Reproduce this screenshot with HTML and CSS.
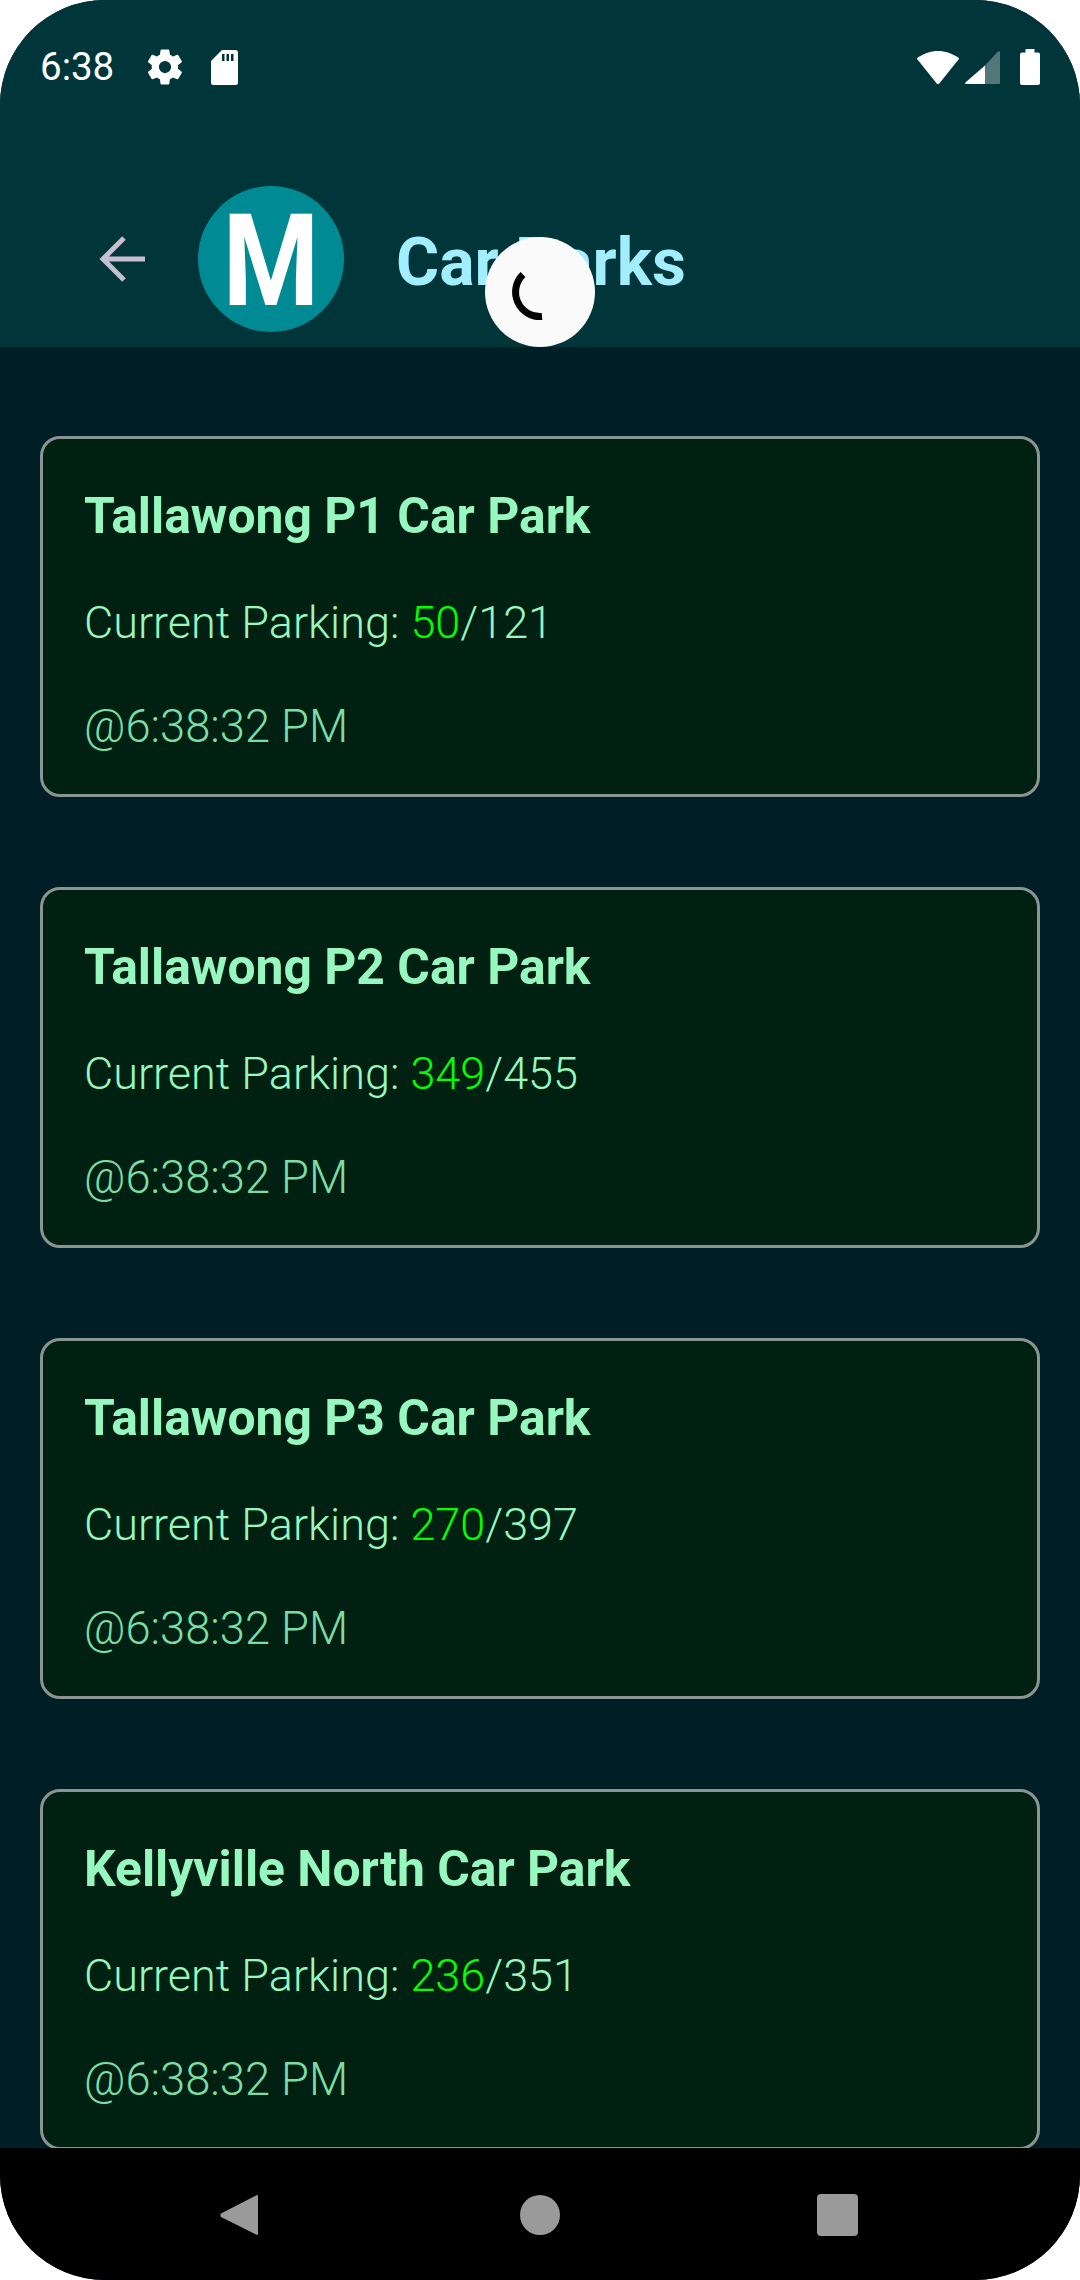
FILE: index.html
```html
<!DOCTYPE html>
<html lang="en">
<head>
    <meta charset="UTF-8">
    <meta name="viewport" content="width=device-width, initial-scale=1.0">
    <title>Car Parks</title>
    <link rel="stylesheet" href="styles.css">
</head>
<body>
    <div class="phone">
        <header class="header">
            <div class="status-bar">
                <div class="status-left">
                    <span class="clock">6:38</span>
                    <svg class="gear" viewBox="0 0 24 24"><path fill="#fff" d="M19.4 13c.05-.3.1-.65.1-1s-.05-.7-.1-1l2.1-1.65c.2-.15.25-.4.1-.65l-2-3.45c-.1-.2-.4-.3-.6-.2l-2.5 1c-.5-.4-1.05-.7-1.7-1L14.45 2.4c0-.25-.25-.4-.5-.4h-4c-.25 0-.45.15-.5.4L9.1 5.05c-.6.25-1.15.6-1.7 1l-2.5-1c-.25-.1-.5 0-.6.2l-2 3.45c-.15.25-.1.5.1.65L4.5 11c-.05.3-.1.65-.1 1s.05.7.1 1l-2.1 1.65c-.2.15-.25.4-.1.65l2 3.45c.1.2.4.3.6.2l2.5-1c.5.4 1.05.7 1.7 1l.35 2.65c.05.25.25.4.5.4h4c.25 0 .45-.15.5-.4l.35-2.65c.6-.25 1.15-.6 1.7-1l2.5 1c.25.1.5 0 .6-.2l2-3.45c.15-.25.1-.5-.1-.65L19.4 13zM12 15.5a3.5 3.5 0 1 1 0-7 3.5 3.5 0 0 1 0 7z"/></svg>
                    <svg class="sd" viewBox="0 0 27 35"><path fill="#fff" d="M11 0h13.500A2.500 2.500 0 0 1 27 2.500v30a2.500 2.500 0 0 1-2.500 2.500h-22A2.500 2.500 0 0 1 0 32.500V11z"/><path fill="#00363a" d="M11 4h2.500v7H11zM15.500 4H18v7h-2.500zM20 4h2.500v7H20z"/></svg>
                </div>
                <div class="status-right">
                    <svg class="wifi" viewBox="0 0 42 33"><path fill="#fff" d="M21 0c7.500 0 14 2.500 20.500 6.800.5.4.6 1 .2 1.500L22.300 32.400c-.7.800-1.900.800-2.600 0L.3 8.300c-.4-.5-.3-1.100.2-1.500C7 2.500 13.500 0 21 0z"/></svg>
                    <svg class="signal" viewBox="0 0 35 35"><path fill="#fff" d="M20 15.500V34H1c-.8 0-1.200-.9-.6-1.500z"/><path fill="#fff" fill-opacity=".32" d="M20 15.500L33 1.500c.7-.6 2-.3 2 .7V33c0 .6-.4 1-1 1H20z"/></svg>
                    <svg class="battery" viewBox="0 0 20 36"><path fill="#fff" d="M5.500 0h9v3.500h3.500c1.100 0 2 .9 2 2V34c0 1.100-.9 2-2 2H2c-1.100 0-2-.9-2-2V5.500c0-1.100.9-2 2-2h3.500z"/></svg>
                </div>
            </div>
            <div class="app-bar">
                <svg class="back" viewBox="0 0 46 46"><path fill="none" stroke="#c6bfd0" stroke-width="5" d="M46 23H5M25 2L4 23l21 21"/></svg>
                <div class="logo"><span class="logo-m">M</span></div>
                <h1 class="title">Car Parks</h1>
            </div>
        </header>

        <div class="spinner">
            <svg viewBox="0 0 80 80"><path fill="none" stroke="#000" stroke-width="7" d="M23 22.500A24.500 24.500 0 0 0 42 64.500"/></svg>
        </div>

        <main class="list">
            <section class="card">
                <h2 class="card-name">Tallawong P1 Car Park</h2>
                <p class="card-count">Current Parking: <span class="free">50</span>/121</p>
                <p class="card-time">@6:38:32 PM</p>
            </section>
            <section class="card">
                <h2 class="card-name">Tallawong P2 Car Park</h2>
                <p class="card-count">Current Parking: <span class="free">349</span>/455</p>
                <p class="card-time">@6:38:32 PM</p>
            </section>
            <section class="card">
                <h2 class="card-name">Tallawong P3 Car Park</h2>
                <p class="card-count">Current Parking: <span class="free">270</span>/397</p>
                <p class="card-time">@6:38:32 PM</p>
            </section>
            <section class="card">
                <h2 class="card-name">Kellyville North Car Park</h2>
                <p class="card-count">Current Parking: <span class="free">236</span>/351</p>
                <p class="card-time">@6:38:32 PM</p>
            </section>
        </main>

        <nav class="nav-bar">
            <svg viewBox="0 0 44 44"><path fill="#9a9a9a" d="M39 3v38c0 1-.8 1.400-1.400.7L2 24c-.8-1-.8-2.500 0-3.500L37.600 2.300C38.200 1.600 39 2 39 3z"/></svg>
            <svg viewBox="0 0 44 44"><circle cx="22" cy="22" r="20" fill="#9a9a9a"/></svg>
            <svg viewBox="0 0 44 44"><rect x="0" y="1" width="41" height="42" rx="4" fill="#9a9a9a"/></svg>
        </nav>
    </div>
</body>
</html>
```

FILE: styles.css
```css
* {
    margin: 0;
    padding: 0;
    box-sizing: border-box;
}

body {
    background: #fff;
    font-family: Roboto, sans-serif;
}

.phone {
    position: relative;
    width: 1080px;
    height: 2280px;
    display: flex;
    flex-direction: column;
    border-radius: 105px;
    overflow: hidden;
    background: #001e26;
}

.header {
    height: 347px;
    flex-shrink: 0;
    background: #00363a;
}

.status-bar {
    height: 132px;
    padding: 49px 40px 0 40px;
    display: flex;
    justify-content: space-between;
    align-items: flex-start;
}

.status-left {
    display: flex;
    align-items: center;
    height: 36px;
}

.clock {
    color: #fff;
    font-size: 38.5px;
    line-height: 36px;
    width: 104px;
}

.gear {
    width: 42px;
    height: 42px;
    flex-shrink: 0;
}

.sd {
    width: 27px;
    height: 35px;
    margin-left: 25px;
}

.status-right {
    display: flex;
    align-items: center;
    height: 36px;
}

.wifi {
    width: 42px;
    height: 33px;
}

.signal {
    width: 35px;
    height: 35px;
    margin-left: 6px;
}

.battery {
    width: 20px;
    height: 36px;
    margin-left: 20px;
}

.app-bar {
    display: flex;
    align-items: center;
    padding: 54px 0 0 99px;
}

.back {
    width: 46px;
    height: 46px;
}

.logo {
    width: 146px;
    height: 146px;
    margin-left: 53px;
    border-radius: 50%;
    background: #008b94;
    display: flex;
    justify-content: center;
    align-items: center;
}

.logo-m {
    color: #fff;
    font-size: 128px;
    font-weight: 700;
    line-height: 1;
    transform: scaleX(0.86);
    padding-top: 3px;
}

.title {
    margin-left: 52px;
    padding-top: 8px;
    color: #a2eeff;
    font-size: 66px;
    font-weight: 700;
    line-height: 76px;
}

.spinner {
    position: absolute;
    left: 485px;
    top: 237px;
    width: 110px;
    height: 110px;
    border-radius: 50%;
    background: #fafafa;
    display: flex;
    justify-content: center;
    align-items: center;
}

.spinner svg {
    width: 80px;
    height: 80px;
}

.list {
    flex: 1;
    min-height: 0;
    overflow: hidden;
    padding: 89px 40px 0 40px;
    display: flex;
    flex-direction: column;
    gap: 90px;
}

.card {
    height: 361px;
    flex-shrink: 0;
    padding: 47px 41px 0 41px;
    background: #002011;
    border: 3px solid #8a9490;
    border-radius: 20px;
    display: flex;
    flex-direction: column;
    gap: 45px;
}

.card-name {
    color: #96f7bf;
    font-size: 49.8px;
    font-weight: 700;
    line-height: 60px;
    margin-bottom: 2px;
}

.card-count {
    color: #96f7bf;
    font-size: 45px;
    font-weight: 340;
    line-height: 60px;
    margin-bottom: -1px;
}

.free {
    color: #00ff00;
}

.card-time {
    color: #7bdca5;
    font-size: 45.3px;
    font-weight: 340;
    line-height: 60px;
}

.nav-bar {
    height: 132px;
    flex-shrink: 0;
    background: #000;
    display: flex;
    justify-content: center;
    align-items: flex-start;
    gap: 255px;
    padding-top: 45px;
}

.nav-bar svg {
    width: 44px;
    height: 44px;
}
```
